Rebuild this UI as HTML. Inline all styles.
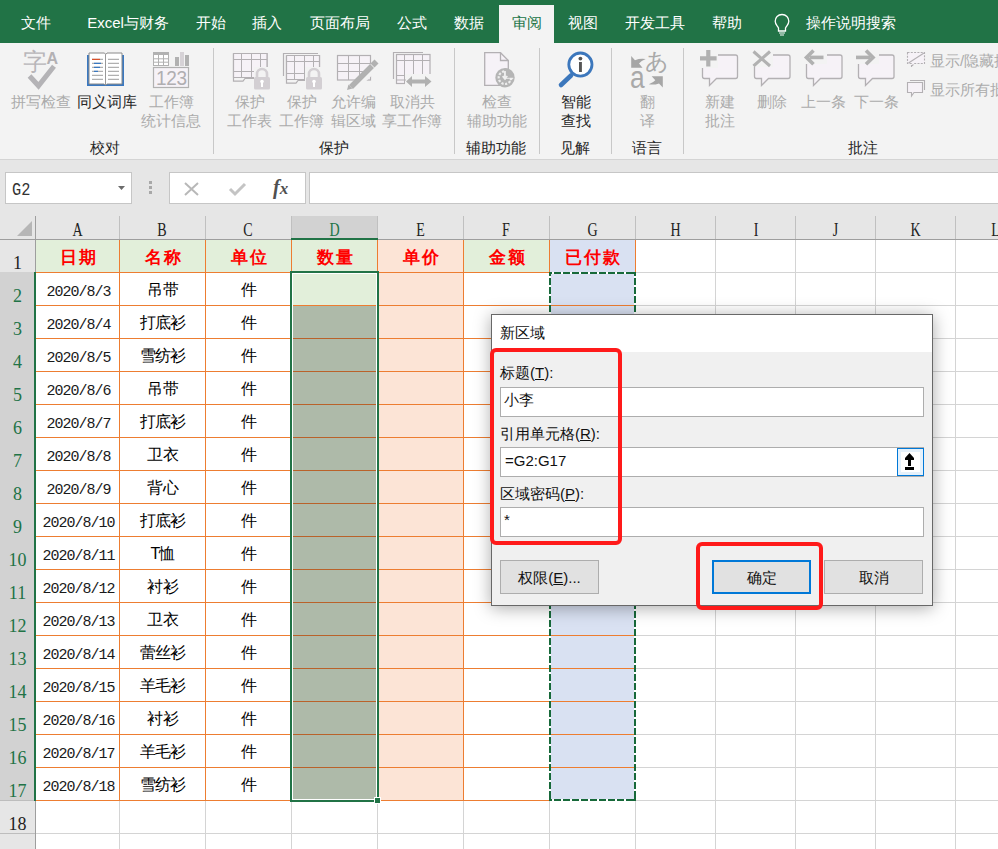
<!DOCTYPE html><html><head><meta charset="utf-8"><style>
html,body{margin:0;padding:0;}
body{width:998px;height:849px;overflow:hidden;position:relative;background:#fff;font-family:'Liberation Sans',sans-serif;}
.b{position:absolute;box-sizing:border-box;}
.t{position:absolute;text-align:center;white-space:nowrap;}
.tl{position:absolute;white-space:nowrap;}
</style></head><body>
<div class="b" style="left:0px;top:0px;width:998px;height:43px;background:#217346"></div>
<div class="b" style="left:499px;top:5px;width:55px;height:38px;background:#f3f3f3"></div>
<div class="t" style="left:-64.0px;top:13px;width:200px;font-size:15px;line-height:20px;color:#fff;font-weight:normal;">文件</div>
<div class="t" style="left:28.0px;top:13px;width:200px;font-size:15px;line-height:20px;color:#fff;font-weight:normal;">Excel与财务</div>
<div class="t" style="left:110.5px;top:13px;width:200px;font-size:15px;line-height:20px;color:#fff;font-weight:normal;">开始</div>
<div class="t" style="left:167.0px;top:13px;width:200px;font-size:15px;line-height:20px;color:#fff;font-weight:normal;">插入</div>
<div class="t" style="left:239.5px;top:13px;width:200px;font-size:15px;line-height:20px;color:#fff;font-weight:normal;">页面布局</div>
<div class="t" style="left:312.0px;top:13px;width:200px;font-size:15px;line-height:20px;color:#fff;font-weight:normal;">公式</div>
<div class="t" style="left:369.0px;top:13px;width:200px;font-size:15px;line-height:20px;color:#fff;font-weight:normal;">数据</div>
<div class="t" style="left:483.0px;top:13px;width:200px;font-size:15px;line-height:20px;color:#fff;font-weight:normal;">视图</div>
<div class="t" style="left:554.5px;top:13px;width:200px;font-size:15px;line-height:20px;color:#fff;font-weight:normal;">开发工具</div>
<div class="t" style="left:626.5px;top:13px;width:200px;font-size:15px;line-height:20px;color:#fff;font-weight:normal;">帮助</div>
<div class="t" style="left:751.0px;top:13px;width:200px;font-size:15px;line-height:20px;color:#fff;font-weight:normal;">操作说明搜索</div>
<div class="t" style="left:426.5px;top:13px;width:200px;font-size:15px;line-height:20px;color:#217346;font-weight:normal;">审阅</div>
<div class="b" style="left:0px;top:43px;width:998px;height:116px;background:#f3f3f3"></div>
<div class="b" style="left:0px;top:159px;width:998px;height:1px;background:#d4d4d4"></div>
<div class="b" style="left:0px;top:160px;width:998px;height:56px;background:#e6e6e6"></div>
<div class="t" style="left:-59.5px;top:92px;width:200px;font-size:15px;line-height:20px;color:#ababab;font-weight:normal;">拼写检查</div>
<div class="t" style="left:6.5px;top:92px;width:200px;font-size:15px;line-height:20px;color:#262626;font-weight:normal;">同义词库</div>
<div class="t" style="left:71.5px;top:92px;width:200px;font-size:15px;line-height:20px;color:#ababab;font-weight:normal;">工作簿</div>
<div class="t" style="left:70.5px;top:111px;width:200px;font-size:15px;line-height:20px;color:#ababab;font-weight:normal;">统计信息</div>
<div class="t" style="left:5.0px;top:138px;width:200px;font-size:15px;line-height:20px;color:#262626;font-weight:normal;">校对</div>
<div class="t" style="left:149.5px;top:92px;width:200px;font-size:15px;line-height:20px;color:#ababab;font-weight:normal;">保护</div>
<div class="t" style="left:149.5px;top:111px;width:200px;font-size:15px;line-height:20px;color:#ababab;font-weight:normal;">工作表</div>
<div class="t" style="left:201.5px;top:92px;width:200px;font-size:15px;line-height:20px;color:#ababab;font-weight:normal;">保护</div>
<div class="t" style="left:201.5px;top:111px;width:200px;font-size:15px;line-height:20px;color:#ababab;font-weight:normal;">工作簿</div>
<div class="t" style="left:253.5px;top:92px;width:200px;font-size:15px;line-height:20px;color:#ababab;font-weight:normal;">允许编</div>
<div class="t" style="left:253.5px;top:111px;width:200px;font-size:15px;line-height:20px;color:#ababab;font-weight:normal;">辑区域</div>
<div class="t" style="left:312.0px;top:92px;width:200px;font-size:15px;line-height:20px;color:#ababab;font-weight:normal;">取消共</div>
<div class="t" style="left:312.0px;top:111px;width:200px;font-size:15px;line-height:20px;color:#ababab;font-weight:normal;">享工作簿</div>
<div class="t" style="left:233.5px;top:138px;width:200px;font-size:15px;line-height:20px;color:#262626;font-weight:normal;">保护</div>
<div class="t" style="left:397.0px;top:92px;width:200px;font-size:15px;line-height:20px;color:#ababab;font-weight:normal;">检查</div>
<div class="t" style="left:396.5px;top:111px;width:200px;font-size:15px;line-height:20px;color:#ababab;font-weight:normal;">辅助功能</div>
<div class="t" style="left:396.0px;top:138px;width:200px;font-size:15px;line-height:20px;color:#262626;font-weight:normal;">辅助功能</div>
<div class="t" style="left:476.0px;top:92px;width:200px;font-size:15px;line-height:20px;color:#262626;font-weight:normal;">智能</div>
<div class="t" style="left:476.0px;top:111px;width:200px;font-size:15px;line-height:20px;color:#262626;font-weight:normal;">查找</div>
<div class="t" style="left:475.0px;top:138px;width:200px;font-size:15px;line-height:20px;color:#262626;font-weight:normal;">见解</div>
<div class="t" style="left:547.5px;top:92px;width:200px;font-size:15px;line-height:20px;color:#ababab;font-weight:normal;">翻</div>
<div class="t" style="left:547.5px;top:111px;width:200px;font-size:15px;line-height:20px;color:#ababab;font-weight:normal;">译</div>
<div class="t" style="left:547.0px;top:138px;width:200px;font-size:15px;line-height:20px;color:#262626;font-weight:normal;">语言</div>
<div class="t" style="left:620.0px;top:92px;width:200px;font-size:15px;line-height:20px;color:#ababab;font-weight:normal;">新建</div>
<div class="t" style="left:620.0px;top:111px;width:200px;font-size:15px;line-height:20px;color:#ababab;font-weight:normal;">批注</div>
<div class="t" style="left:671.5px;top:92px;width:200px;font-size:15px;line-height:20px;color:#ababab;font-weight:normal;">删除</div>
<div class="t" style="left:723.5px;top:92px;width:200px;font-size:15px;line-height:20px;color:#ababab;font-weight:normal;">上一条</div>
<div class="t" style="left:776.0px;top:92px;width:200px;font-size:15px;line-height:20px;color:#ababab;font-weight:normal;">下一条</div>
<div class="t" style="left:763.0px;top:138px;width:200px;font-size:15px;line-height:20px;color:#262626;font-weight:normal;">批注</div>
<div class="tl" style="left:930px;top:51px;font-size:15px;line-height:20px;color:#ababab;font-weight:normal;">显示/隐藏批注</div>
<div class="tl" style="left:930px;top:80px;font-size:15px;line-height:20px;color:#ababab;font-weight:normal;">显示所有批注</div>
<div class="b" style="left:213px;top:48px;width:1px;height:106px;background:#c8c8c8"></div>
<div class="b" style="left:454px;top:48px;width:1px;height:106px;background:#c8c8c8"></div>
<div class="b" style="left:539px;top:48px;width:1px;height:106px;background:#c8c8c8"></div>
<div class="b" style="left:611px;top:48px;width:1px;height:106px;background:#c8c8c8"></div>
<div class="b" style="left:683px;top:48px;width:1px;height:106px;background:#c8c8c8"></div>
<div class="b" style="left:5px;top:172px;width:127px;height:32px;background:#fff;border:1px solid #c6c6c6"></div>
<div class="tl" style="left:12px;top:179px;font-size:18px;line-height:22px;color:#333;font-weight:normal;font-family:'Liberation Mono';"><span style="display:inline-block;transform:scaleX(.85);transform-origin:0 0">G2</span></div>
<svg class="b" style="left:117px;top:185px" width="9" height="6" viewBox="0 0 9 6"><path d="M1 1H8L4.5 5Z" fill="#6b6b6b"/></svg>
<div class="b" style="left:149px;top:181px;width:3px;height:3px;background:#a8a8a8"></div>
<div class="b" style="left:149px;top:186px;width:3px;height:3px;background:#a8a8a8"></div>
<div class="b" style="left:149px;top:191px;width:3px;height:3px;background:#a8a8a8"></div>
<div class="b" style="left:169px;top:172px;width:137px;height:32px;background:#fff;border:1px solid #c6c6c6"></div>
<div class="b" style="left:309px;top:172px;width:700px;height:32px;background:#fff;border:1px solid #c6c6c6"></div>
<svg class="b" style="left:183px;top:181px" width="18" height="16" viewBox="0 0 18 16"><path d="M2 2L15 14M15 2L2 14" stroke="#b8b8b8" stroke-width="2"/></svg>
<svg class="b" style="left:228px;top:181px" width="20" height="16" viewBox="0 0 20 16"><path d="M2 8L7 13L17 3" stroke="#c4c4c4" stroke-width="3" fill="none"/></svg>
<div class="tl" style="left:273px;top:175.5px;font-size:20px;line-height:22px;color:#505050;font-weight:bold;font-family:'Liberation Serif';"><i>f</i><i style="font-size:17px">x</i></div>
<div class="b" style="left:0px;top:216px;width:998px;height:24px;background:#e6e6e6"></div>
<div class="b" style="left:291px;top:216px;width:86px;height:23px;background:#d2d2d2"></div>
<div class="b" style="left:35px;top:216px;width:1px;height:23px;background:#c0c0c0"></div>
<div class="b" style="left:119px;top:216px;width:1px;height:23px;background:#c0c0c0"></div>
<div class="b" style="left:205px;top:216px;width:1px;height:23px;background:#c0c0c0"></div>
<div class="b" style="left:291px;top:216px;width:1px;height:23px;background:#c0c0c0"></div>
<div class="b" style="left:377px;top:216px;width:1px;height:23px;background:#c0c0c0"></div>
<div class="b" style="left:463px;top:216px;width:1px;height:23px;background:#c0c0c0"></div>
<div class="b" style="left:549px;top:216px;width:1px;height:23px;background:#c0c0c0"></div>
<div class="b" style="left:635px;top:216px;width:1px;height:23px;background:#c0c0c0"></div>
<div class="b" style="left:715px;top:216px;width:1px;height:23px;background:#c0c0c0"></div>
<div class="b" style="left:795px;top:216px;width:1px;height:23px;background:#c0c0c0"></div>
<div class="b" style="left:875px;top:216px;width:1px;height:23px;background:#c0c0c0"></div>
<div class="b" style="left:955px;top:216px;width:1px;height:23px;background:#c0c0c0"></div>
<div class="b" style="left:0px;top:239px;width:998px;height:1px;background:#9e9e9e"></div>
<div class="b" style="left:291px;top:238px;width:87px;height:2px;background:#217346"></div>
<div class="t" style="left:-22.5px;top:220px;width:200px;font-size:18px;line-height:20px;color:#222;font-weight:normal;font-family:'Liberation Serif';"><span style="display:inline-block;transform:scaleX(.78)">A</span></div>
<div class="t" style="left:62.5px;top:220px;width:200px;font-size:18px;line-height:20px;color:#222;font-weight:normal;font-family:'Liberation Serif';"><span style="display:inline-block;transform:scaleX(.78)">B</span></div>
<div class="t" style="left:148.5px;top:220px;width:200px;font-size:18px;line-height:20px;color:#222;font-weight:normal;font-family:'Liberation Serif';"><span style="display:inline-block;transform:scaleX(.78)">C</span></div>
<div class="t" style="left:234.5px;top:220px;width:200px;font-size:18px;line-height:20px;color:#217346;font-weight:normal;font-family:'Liberation Serif';"><span style="display:inline-block;transform:scaleX(.78)">D</span></div>
<div class="t" style="left:320.5px;top:220px;width:200px;font-size:18px;line-height:20px;color:#222;font-weight:normal;font-family:'Liberation Serif';"><span style="display:inline-block;transform:scaleX(.78)">E</span></div>
<div class="t" style="left:406.5px;top:220px;width:200px;font-size:18px;line-height:20px;color:#222;font-weight:normal;font-family:'Liberation Serif';"><span style="display:inline-block;transform:scaleX(.78)">F</span></div>
<div class="t" style="left:492.5px;top:220px;width:200px;font-size:18px;line-height:20px;color:#222;font-weight:normal;font-family:'Liberation Serif';"><span style="display:inline-block;transform:scaleX(.78)">G</span></div>
<div class="t" style="left:575.5px;top:220px;width:200px;font-size:18px;line-height:20px;color:#222;font-weight:normal;font-family:'Liberation Serif';"><span style="display:inline-block;transform:scaleX(.78)">H</span></div>
<div class="t" style="left:655.5px;top:220px;width:200px;font-size:18px;line-height:20px;color:#222;font-weight:normal;font-family:'Liberation Serif';"><span style="display:inline-block;transform:scaleX(.78)">I</span></div>
<div class="t" style="left:735.5px;top:220px;width:200px;font-size:18px;line-height:20px;color:#222;font-weight:normal;font-family:'Liberation Serif';"><span style="display:inline-block;transform:scaleX(.78)">J</span></div>
<div class="t" style="left:815.5px;top:220px;width:200px;font-size:18px;line-height:20px;color:#222;font-weight:normal;font-family:'Liberation Serif';"><span style="display:inline-block;transform:scaleX(.78)">K</span></div>
<div class="t" style="left:895.5px;top:220px;width:200px;font-size:18px;line-height:20px;color:#222;font-weight:normal;font-family:'Liberation Serif';"><span style="display:inline-block;transform:scaleX(.78)">L</span></div>
<svg class="b" style="left:16px;top:219px" width="17" height="18" viewBox="0 0 17 18"><path d="M1 17L16 2V17Z" fill="#b6b6b6"/></svg>
<div class="b" style="left:0px;top:240px;width:35px;height:609px;background:#e6e6e6"></div>
<div class="b" style="left:0px;top:272px;width:35px;height:528px;background:#d2d2d2"></div>
<div class="b" style="left:35px;top:216px;width:1px;height:633px;background:#9e9e9e"></div>
<div class="b" style="left:0px;top:272px;width:35px;height:1px;#bdbdbd"></div>
<div class="t" style="left:-82.5px;top:252px;width:200px;font-size:18px;line-height:22px;color:#222;font-weight:normal;font-family:'Liberation Serif';">1</div>
<div class="b" style="left:0px;top:305px;width:35px;height:1px;#bdbdbd"></div>
<div class="t" style="left:-82.5px;top:285px;width:200px;font-size:18px;line-height:22px;color:#217346;font-weight:normal;font-family:'Liberation Serif';">2</div>
<div class="b" style="left:0px;top:338px;width:35px;height:1px;#bdbdbd"></div>
<div class="t" style="left:-82.5px;top:318px;width:200px;font-size:18px;line-height:22px;color:#217346;font-weight:normal;font-family:'Liberation Serif';">3</div>
<div class="b" style="left:0px;top:371px;width:35px;height:1px;#bdbdbd"></div>
<div class="t" style="left:-82.5px;top:351px;width:200px;font-size:18px;line-height:22px;color:#217346;font-weight:normal;font-family:'Liberation Serif';">4</div>
<div class="b" style="left:0px;top:404px;width:35px;height:1px;#bdbdbd"></div>
<div class="t" style="left:-82.5px;top:384px;width:200px;font-size:18px;line-height:22px;color:#217346;font-weight:normal;font-family:'Liberation Serif';">5</div>
<div class="b" style="left:0px;top:437px;width:35px;height:1px;#bdbdbd"></div>
<div class="t" style="left:-82.5px;top:417px;width:200px;font-size:18px;line-height:22px;color:#217346;font-weight:normal;font-family:'Liberation Serif';">6</div>
<div class="b" style="left:0px;top:470px;width:35px;height:1px;#bdbdbd"></div>
<div class="t" style="left:-82.5px;top:450px;width:200px;font-size:18px;line-height:22px;color:#217346;font-weight:normal;font-family:'Liberation Serif';">7</div>
<div class="b" style="left:0px;top:503px;width:35px;height:1px;#bdbdbd"></div>
<div class="t" style="left:-82.5px;top:483px;width:200px;font-size:18px;line-height:22px;color:#217346;font-weight:normal;font-family:'Liberation Serif';">8</div>
<div class="b" style="left:0px;top:536px;width:35px;height:1px;#bdbdbd"></div>
<div class="t" style="left:-82.5px;top:516px;width:200px;font-size:18px;line-height:22px;color:#217346;font-weight:normal;font-family:'Liberation Serif';">9</div>
<div class="b" style="left:0px;top:569px;width:35px;height:1px;#bdbdbd"></div>
<div class="t" style="left:-82.5px;top:549px;width:200px;font-size:18px;line-height:22px;color:#217346;font-weight:normal;font-family:'Liberation Serif';">10</div>
<div class="b" style="left:0px;top:602px;width:35px;height:1px;#bdbdbd"></div>
<div class="t" style="left:-82.5px;top:582px;width:200px;font-size:18px;line-height:22px;color:#217346;font-weight:normal;font-family:'Liberation Serif';">11</div>
<div class="b" style="left:0px;top:635px;width:35px;height:1px;#bdbdbd"></div>
<div class="t" style="left:-82.5px;top:615px;width:200px;font-size:18px;line-height:22px;color:#217346;font-weight:normal;font-family:'Liberation Serif';">12</div>
<div class="b" style="left:0px;top:668px;width:35px;height:1px;#bdbdbd"></div>
<div class="t" style="left:-82.5px;top:648px;width:200px;font-size:18px;line-height:22px;color:#217346;font-weight:normal;font-family:'Liberation Serif';">13</div>
<div class="b" style="left:0px;top:701px;width:35px;height:1px;#bdbdbd"></div>
<div class="t" style="left:-82.5px;top:681px;width:200px;font-size:18px;line-height:22px;color:#217346;font-weight:normal;font-family:'Liberation Serif';">14</div>
<div class="b" style="left:0px;top:734px;width:35px;height:1px;#bdbdbd"></div>
<div class="t" style="left:-82.5px;top:714px;width:200px;font-size:18px;line-height:22px;color:#217346;font-weight:normal;font-family:'Liberation Serif';">15</div>
<div class="b" style="left:0px;top:767px;width:35px;height:1px;#bdbdbd"></div>
<div class="t" style="left:-82.5px;top:747px;width:200px;font-size:18px;line-height:22px;color:#217346;font-weight:normal;font-family:'Liberation Serif';">16</div>
<div class="b" style="left:0px;top:800px;width:35px;height:1px;background:#bdbdbd"></div>
<div class="t" style="left:-82.5px;top:780px;width:200px;font-size:18px;line-height:22px;color:#217346;font-weight:normal;font-family:'Liberation Serif';">17</div>
<div class="b" style="left:0px;top:833px;width:35px;height:1px;background:#bdbdbd"></div>
<div class="t" style="left:-82.5px;top:813px;width:200px;font-size:18px;line-height:22px;color:#222;font-weight:normal;font-family:'Liberation Serif';">18</div>
<div class="b" style="left:34px;top:272px;width:2px;height:529px;background:#217346"></div>
<div class="b" style="left:119px;top:240px;width:1px;height:609px;background:#d4d4d4"></div>
<div class="b" style="left:205px;top:240px;width:1px;height:609px;background:#d4d4d4"></div>
<div class="b" style="left:291px;top:240px;width:1px;height:609px;background:#d4d4d4"></div>
<div class="b" style="left:377px;top:240px;width:1px;height:609px;background:#d4d4d4"></div>
<div class="b" style="left:463px;top:240px;width:1px;height:609px;background:#d4d4d4"></div>
<div class="b" style="left:549px;top:240px;width:1px;height:609px;background:#d4d4d4"></div>
<div class="b" style="left:635px;top:240px;width:1px;height:609px;background:#d4d4d4"></div>
<div class="b" style="left:715px;top:240px;width:1px;height:609px;background:#d4d4d4"></div>
<div class="b" style="left:795px;top:240px;width:1px;height:609px;background:#d4d4d4"></div>
<div class="b" style="left:875px;top:240px;width:1px;height:609px;background:#d4d4d4"></div>
<div class="b" style="left:955px;top:240px;width:1px;height:609px;background:#d4d4d4"></div>
<div class="b" style="left:36px;top:272px;width:962px;height:1px;background:#d4d4d4"></div>
<div class="b" style="left:36px;top:305px;width:962px;height:1px;background:#d4d4d4"></div>
<div class="b" style="left:36px;top:338px;width:962px;height:1px;background:#d4d4d4"></div>
<div class="b" style="left:36px;top:371px;width:962px;height:1px;background:#d4d4d4"></div>
<div class="b" style="left:36px;top:404px;width:962px;height:1px;background:#d4d4d4"></div>
<div class="b" style="left:36px;top:437px;width:962px;height:1px;background:#d4d4d4"></div>
<div class="b" style="left:36px;top:470px;width:962px;height:1px;background:#d4d4d4"></div>
<div class="b" style="left:36px;top:503px;width:962px;height:1px;background:#d4d4d4"></div>
<div class="b" style="left:36px;top:536px;width:962px;height:1px;background:#d4d4d4"></div>
<div class="b" style="left:36px;top:569px;width:962px;height:1px;background:#d4d4d4"></div>
<div class="b" style="left:36px;top:602px;width:962px;height:1px;background:#d4d4d4"></div>
<div class="b" style="left:36px;top:635px;width:962px;height:1px;background:#d4d4d4"></div>
<div class="b" style="left:36px;top:668px;width:962px;height:1px;background:#d4d4d4"></div>
<div class="b" style="left:36px;top:701px;width:962px;height:1px;background:#d4d4d4"></div>
<div class="b" style="left:36px;top:734px;width:962px;height:1px;background:#d4d4d4"></div>
<div class="b" style="left:36px;top:767px;width:962px;height:1px;background:#d4d4d4"></div>
<div class="b" style="left:36px;top:800px;width:962px;height:1px;background:#d4d4d4"></div>
<div class="b" style="left:36px;top:833px;width:962px;height:1px;background:#d4d4d4"></div>
<div class="b" style="left:36px;top:240px;width:83px;height:32px;background:#e2efda"></div>
<div class="b" style="left:120px;top:240px;width:85px;height:32px;background:#e2efda"></div>
<div class="b" style="left:206px;top:240px;width:85px;height:32px;background:#e2efda"></div>
<div class="b" style="left:292px;top:240px;width:85px;height:32px;background:#e2efda"></div>
<div class="b" style="left:378px;top:240px;width:85px;height:32px;background:#fce4d6"></div>
<div class="b" style="left:464px;top:240px;width:85px;height:32px;background:#e2efda"></div>
<div class="b" style="left:550px;top:240px;width:85px;height:32px;background:#d9e1f2"></div>
<div class="b" style="left:378px;top:273px;width:85px;height:527px;background:#fce4d6"></div>
<div class="b" style="left:550px;top:273px;width:85px;height:527px;background:#d9e1f2"></div>
<div class="b" style="left:292px;top:306px;width:85px;height:494px;background:#aebaa9"></div>
<div class="b" style="left:292px;top:273px;width:85px;height:32px;background:#e2efda"></div>
<div class="b" style="left:119px;top:240px;width:1px;height:561px;background:#ed7d31"></div>
<div class="b" style="left:205px;top:240px;width:1px;height:561px;background:#ed7d31"></div>
<div class="b" style="left:291px;top:240px;width:1px;height:561px;background:#ed7d31"></div>
<div class="b" style="left:377px;top:240px;width:1px;height:561px;background:#ed7d31"></div>
<div class="b" style="left:463px;top:240px;width:1px;height:561px;background:#ed7d31"></div>
<div class="b" style="left:549px;top:240px;width:1px;height:561px;background:#ed7d31"></div>
<div class="b" style="left:635px;top:240px;width:1px;height:561px;background:#ed7d31"></div>
<div class="b" style="left:36px;top:272px;width:600px;height:1px;background:#ed7d31"></div>
<div class="b" style="left:36px;top:305px;width:600px;height:1px;background:#ed7d31"></div>
<div class="b" style="left:36px;top:338px;width:600px;height:1px;background:#ed7d31"></div>
<div class="b" style="left:36px;top:371px;width:600px;height:1px;background:#ed7d31"></div>
<div class="b" style="left:36px;top:404px;width:600px;height:1px;background:#ed7d31"></div>
<div class="b" style="left:36px;top:437px;width:600px;height:1px;background:#ed7d31"></div>
<div class="b" style="left:36px;top:470px;width:600px;height:1px;background:#ed7d31"></div>
<div class="b" style="left:36px;top:503px;width:600px;height:1px;background:#ed7d31"></div>
<div class="b" style="left:36px;top:536px;width:600px;height:1px;background:#ed7d31"></div>
<div class="b" style="left:36px;top:569px;width:600px;height:1px;background:#ed7d31"></div>
<div class="b" style="left:36px;top:602px;width:600px;height:1px;background:#ed7d31"></div>
<div class="b" style="left:36px;top:635px;width:600px;height:1px;background:#ed7d31"></div>
<div class="b" style="left:36px;top:668px;width:600px;height:1px;background:#ed7d31"></div>
<div class="b" style="left:36px;top:701px;width:600px;height:1px;background:#ed7d31"></div>
<div class="b" style="left:36px;top:734px;width:600px;height:1px;background:#ed7d31"></div>
<div class="b" style="left:36px;top:767px;width:600px;height:1px;background:#ed7d31"></div>
<div class="b" style="left:36px;top:800px;width:600px;height:1px;background:#ed7d31"></div>
<div class="b" style="left:292px;top:338px;width:85px;height:1px;background:#b9622a"></div>
<div class="b" style="left:292px;top:371px;width:85px;height:1px;background:#b9622a"></div>
<div class="b" style="left:292px;top:404px;width:85px;height:1px;background:#b9622a"></div>
<div class="b" style="left:292px;top:437px;width:85px;height:1px;background:#b9622a"></div>
<div class="b" style="left:292px;top:470px;width:85px;height:1px;background:#b9622a"></div>
<div class="b" style="left:292px;top:503px;width:85px;height:1px;background:#b9622a"></div>
<div class="b" style="left:292px;top:536px;width:85px;height:1px;background:#b9622a"></div>
<div class="b" style="left:292px;top:569px;width:85px;height:1px;background:#b9622a"></div>
<div class="b" style="left:292px;top:602px;width:85px;height:1px;background:#b9622a"></div>
<div class="b" style="left:292px;top:635px;width:85px;height:1px;background:#b9622a"></div>
<div class="b" style="left:292px;top:668px;width:85px;height:1px;background:#b9622a"></div>
<div class="b" style="left:292px;top:701px;width:85px;height:1px;background:#b9622a"></div>
<div class="b" style="left:292px;top:734px;width:85px;height:1px;background:#b9622a"></div>
<div class="b" style="left:292px;top:767px;width:85px;height:1px;background:#b9622a"></div>
<div class="t" style="left:-21.5px;top:248px;width:200px;font-size:17px;line-height:20px;color:#ff0000;font-weight:900;letter-spacing:2px;">日期</div>
<div class="t" style="left:63.5px;top:248px;width:200px;font-size:17px;line-height:20px;color:#ff0000;font-weight:900;letter-spacing:2px;">名称</div>
<div class="t" style="left:149.5px;top:248px;width:200px;font-size:17px;line-height:20px;color:#ff0000;font-weight:900;letter-spacing:2px;">单位</div>
<div class="t" style="left:235.5px;top:248px;width:200px;font-size:17px;line-height:20px;color:#ff0000;font-weight:900;letter-spacing:2px;">数量</div>
<div class="t" style="left:321.5px;top:248px;width:200px;font-size:17px;line-height:20px;color:#ff0000;font-weight:900;letter-spacing:2px;">单价</div>
<div class="t" style="left:407.5px;top:248px;width:200px;font-size:17px;line-height:20px;color:#ff0000;font-weight:900;letter-spacing:2px;">金额</div>
<div class="t" style="left:493.5px;top:248px;width:200px;font-size:17px;line-height:20px;color:#ff0000;font-weight:900;letter-spacing:2px;">已付款</div>
<div class="t" style="left:-21.5px;top:283px;width:200px;font-size:15px;line-height:20px;color:#1a1a1a;font-weight:normal;font-family:'Liberation Mono';letter-spacing:-1px;">2020/8/3</div>
<div class="t" style="left:62.6px;top:280px;width:200px;font-size:16px;line-height:20px;color:#000;font-weight:300;letter-spacing:-0.7px;">吊带</div>
<div class="t" style="left:149.0px;top:280px;width:200px;font-size:16px;line-height:20px;color:#000;font-weight:300;">件</div>
<div class="t" style="left:-21.5px;top:316px;width:200px;font-size:15px;line-height:20px;color:#1a1a1a;font-weight:normal;font-family:'Liberation Mono';letter-spacing:-1px;">2020/8/4</div>
<div class="t" style="left:62.6px;top:313px;width:200px;font-size:16px;line-height:20px;color:#000;font-weight:300;letter-spacing:-0.7px;">打底衫</div>
<div class="t" style="left:149.0px;top:313px;width:200px;font-size:16px;line-height:20px;color:#000;font-weight:300;">件</div>
<div class="t" style="left:-21.5px;top:349px;width:200px;font-size:15px;line-height:20px;color:#1a1a1a;font-weight:normal;font-family:'Liberation Mono';letter-spacing:-1px;">2020/8/5</div>
<div class="t" style="left:62.6px;top:346px;width:200px;font-size:16px;line-height:20px;color:#000;font-weight:300;letter-spacing:-0.7px;">雪纺衫</div>
<div class="t" style="left:149.0px;top:346px;width:200px;font-size:16px;line-height:20px;color:#000;font-weight:300;">件</div>
<div class="t" style="left:-21.5px;top:382px;width:200px;font-size:15px;line-height:20px;color:#1a1a1a;font-weight:normal;font-family:'Liberation Mono';letter-spacing:-1px;">2020/8/6</div>
<div class="t" style="left:62.6px;top:379px;width:200px;font-size:16px;line-height:20px;color:#000;font-weight:300;letter-spacing:-0.7px;">吊带</div>
<div class="t" style="left:149.0px;top:379px;width:200px;font-size:16px;line-height:20px;color:#000;font-weight:300;">件</div>
<div class="t" style="left:-21.5px;top:415px;width:200px;font-size:15px;line-height:20px;color:#1a1a1a;font-weight:normal;font-family:'Liberation Mono';letter-spacing:-1px;">2020/8/7</div>
<div class="t" style="left:62.6px;top:412px;width:200px;font-size:16px;line-height:20px;color:#000;font-weight:300;letter-spacing:-0.7px;">打底衫</div>
<div class="t" style="left:149.0px;top:412px;width:200px;font-size:16px;line-height:20px;color:#000;font-weight:300;">件</div>
<div class="t" style="left:-21.5px;top:448px;width:200px;font-size:15px;line-height:20px;color:#1a1a1a;font-weight:normal;font-family:'Liberation Mono';letter-spacing:-1px;">2020/8/8</div>
<div class="t" style="left:62.6px;top:445px;width:200px;font-size:16px;line-height:20px;color:#000;font-weight:300;letter-spacing:-0.7px;">卫衣</div>
<div class="t" style="left:149.0px;top:445px;width:200px;font-size:16px;line-height:20px;color:#000;font-weight:300;">件</div>
<div class="t" style="left:-21.5px;top:481px;width:200px;font-size:15px;line-height:20px;color:#1a1a1a;font-weight:normal;font-family:'Liberation Mono';letter-spacing:-1px;">2020/8/9</div>
<div class="t" style="left:62.6px;top:478px;width:200px;font-size:16px;line-height:20px;color:#000;font-weight:300;letter-spacing:-0.7px;">背心</div>
<div class="t" style="left:149.0px;top:478px;width:200px;font-size:16px;line-height:20px;color:#000;font-weight:300;">件</div>
<div class="t" style="left:-21.5px;top:514px;width:200px;font-size:15px;line-height:20px;color:#1a1a1a;font-weight:normal;font-family:'Liberation Mono';letter-spacing:-1px;">2020/8/10</div>
<div class="t" style="left:62.6px;top:511px;width:200px;font-size:16px;line-height:20px;color:#000;font-weight:300;letter-spacing:-0.7px;">打底衫</div>
<div class="t" style="left:149.0px;top:511px;width:200px;font-size:16px;line-height:20px;color:#000;font-weight:300;">件</div>
<div class="t" style="left:-21.5px;top:547px;width:200px;font-size:15px;line-height:20px;color:#1a1a1a;font-weight:normal;font-family:'Liberation Mono';letter-spacing:-1px;">2020/8/11</div>
<div class="t" style="left:62.6px;top:544px;width:200px;font-size:16px;line-height:20px;color:#000;font-weight:300;letter-spacing:-0.7px;">T恤</div>
<div class="t" style="left:149.0px;top:544px;width:200px;font-size:16px;line-height:20px;color:#000;font-weight:300;">件</div>
<div class="t" style="left:-21.5px;top:580px;width:200px;font-size:15px;line-height:20px;color:#1a1a1a;font-weight:normal;font-family:'Liberation Mono';letter-spacing:-1px;">2020/8/12</div>
<div class="t" style="left:62.6px;top:577px;width:200px;font-size:16px;line-height:20px;color:#000;font-weight:300;letter-spacing:-0.7px;">衬衫</div>
<div class="t" style="left:149.0px;top:577px;width:200px;font-size:16px;line-height:20px;color:#000;font-weight:300;">件</div>
<div class="t" style="left:-21.5px;top:613px;width:200px;font-size:15px;line-height:20px;color:#1a1a1a;font-weight:normal;font-family:'Liberation Mono';letter-spacing:-1px;">2020/8/13</div>
<div class="t" style="left:62.6px;top:610px;width:200px;font-size:16px;line-height:20px;color:#000;font-weight:300;letter-spacing:-0.7px;">卫衣</div>
<div class="t" style="left:149.0px;top:610px;width:200px;font-size:16px;line-height:20px;color:#000;font-weight:300;">件</div>
<div class="t" style="left:-21.5px;top:646px;width:200px;font-size:15px;line-height:20px;color:#1a1a1a;font-weight:normal;font-family:'Liberation Mono';letter-spacing:-1px;">2020/8/14</div>
<div class="t" style="left:62.6px;top:643px;width:200px;font-size:16px;line-height:20px;color:#000;font-weight:300;letter-spacing:-0.7px;">蕾丝衫</div>
<div class="t" style="left:149.0px;top:643px;width:200px;font-size:16px;line-height:20px;color:#000;font-weight:300;">件</div>
<div class="t" style="left:-21.5px;top:679px;width:200px;font-size:15px;line-height:20px;color:#1a1a1a;font-weight:normal;font-family:'Liberation Mono';letter-spacing:-1px;">2020/8/15</div>
<div class="t" style="left:62.6px;top:676px;width:200px;font-size:16px;line-height:20px;color:#000;font-weight:300;letter-spacing:-0.7px;">羊毛衫</div>
<div class="t" style="left:149.0px;top:676px;width:200px;font-size:16px;line-height:20px;color:#000;font-weight:300;">件</div>
<div class="t" style="left:-21.5px;top:712px;width:200px;font-size:15px;line-height:20px;color:#1a1a1a;font-weight:normal;font-family:'Liberation Mono';letter-spacing:-1px;">2020/8/16</div>
<div class="t" style="left:62.6px;top:709px;width:200px;font-size:16px;line-height:20px;color:#000;font-weight:300;letter-spacing:-0.7px;">衬衫</div>
<div class="t" style="left:149.0px;top:709px;width:200px;font-size:16px;line-height:20px;color:#000;font-weight:300;">件</div>
<div class="t" style="left:-21.5px;top:745px;width:200px;font-size:15px;line-height:20px;color:#1a1a1a;font-weight:normal;font-family:'Liberation Mono';letter-spacing:-1px;">2020/8/17</div>
<div class="t" style="left:62.6px;top:742px;width:200px;font-size:16px;line-height:20px;color:#000;font-weight:300;letter-spacing:-0.7px;">羊毛衫</div>
<div class="t" style="left:149.0px;top:742px;width:200px;font-size:16px;line-height:20px;color:#000;font-weight:300;">件</div>
<div class="t" style="left:-21.5px;top:778px;width:200px;font-size:15px;line-height:20px;color:#1a1a1a;font-weight:normal;font-family:'Liberation Mono';letter-spacing:-1px;">2020/8/18</div>
<div class="t" style="left:62.6px;top:775px;width:200px;font-size:16px;line-height:20px;color:#000;font-weight:300;letter-spacing:-0.7px;">雪纺衫</div>
<div class="t" style="left:149.0px;top:775px;width:200px;font-size:16px;line-height:20px;color:#000;font-weight:300;">件</div>
<div class="b" style="left:290px;top:271px;width:89px;height:531px;border:2px solid #217346"></div>
<div class="b" style="left:292px;top:273px;width:85px;height:527px;border:1px solid #fff"></div>
<div class="b" style="left:374px;top:797px;width:7px;height:7px;background:#fff"></div>
<div class="b" style="left:375px;top:798px;width:5px;height:5px;background:#217346"></div>
<div class="b" style="left:549px;top:272px;width:87px;height:2px;background:repeating-linear-gradient(90deg,#17693a 0 7px,#fff 7px 9px);background-position:-4px 0"></div>
<div class="b" style="left:549px;top:799px;width:87px;height:2px;background:repeating-linear-gradient(90deg,#17693a 0 7px,#fff 7px 9px);background-position:-4px 0"></div>
<div class="b" style="left:549px;top:272px;width:2px;height:529px;background:repeating-linear-gradient(180deg,#17693a 0 7px,#fff 7px 9px);background-position:0 -3px"></div>
<div class="b" style="left:634px;top:272px;width:2px;height:529px;background:repeating-linear-gradient(180deg,#17693a 0 7px,#fff 7px 9px);background-position:0 -3px"></div>
<div class="b" style="left:491px;top:314px;width:442px;height:292px;background:#f0f0f0;border:1px solid #686868;box-shadow:0 2px 16px rgba(0,0,0,0.34);"></div>
<div class="b" style="left:492px;top:315px;width:440px;height:37px;background:#fff"></div>
<div class="tl" style="left:500px;top:323px;font-size:15px;line-height:20px;color:#111;font-weight:normal;">新区域</div>
<div class="tl" style="left:500px;top:363px;font-size:15px;line-height:20px;color:#111;font-weight:normal;">标题(<u>T</u>):</div>
<div class="b" style="left:500px;top:387px;width:424px;height:30px;background:#fff;border:1px solid #adadad"></div>
<div class="tl" style="left:504px;top:390px;font-size:15px;line-height:20px;color:#111;font-weight:normal;">小李</div>
<div class="tl" style="left:500px;top:424px;font-size:15px;line-height:20px;color:#111;font-weight:normal;">引用单元格(<u>R</u>):</div>
<div class="b" style="left:500px;top:447px;width:424px;height:30px;background:#fff;border:1px solid #adadad"></div>
<div class="tl" style="left:505px;top:451px;font-size:15px;line-height:20px;color:#111;font-weight:normal;">=G2:G17</div>
<div class="b" style="left:897px;top:448px;width:27px;height:28px;background:#fff;border:1px solid #0078d7;box-shadow:inset 0 0 0 3px #e5f1fb"></div>
<svg class="b" style="left:904px;top:452px" width="11" height="19" viewBox="0 0 11 19"><path d="M5.5 1L10 6V8H7V14H4V8H1V6Z" fill="#000"/><rect x="1" y="15" width="9" height="3" fill="#000"/></svg>
<div class="tl" style="left:500px;top:484px;font-size:15px;line-height:20px;color:#111;font-weight:normal;">区域密码(<u>P</u>):</div>
<div class="b" style="left:500px;top:507px;width:424px;height:30px;background:#fff;border:1px solid #adadad"></div>
<div class="tl" style="left:504px;top:510px;font-size:15px;line-height:20px;color:#111;font-weight:normal;">*</div>
<div class="b" style="left:500px;top:560px;width:99px;height:34px;background:#e1e1e1;border:1px solid #adadad"></div>
<div class="t" style="left:449.5px;top:568px;width:200px;font-size:15px;line-height:20px;color:#111;font-weight:normal;">权限(<u>E</u>)...</div>
<div class="b" style="left:712px;top:560px;width:99px;height:34px;background:#e1e1e1;border:2px solid #0078d7"></div>
<div class="t" style="left:661.5px;top:568px;width:200px;font-size:15px;line-height:20px;color:#111;font-weight:normal;">确定</div>
<div class="b" style="left:824px;top:560px;width:99px;height:34px;background:#e1e1e1;border:1px solid #adadad"></div>
<div class="t" style="left:773.5px;top:568px;width:200px;font-size:15px;line-height:20px;color:#111;font-weight:normal;">取消</div>
<div class="b" style="left:490px;top:348px;width:132px;height:197px;border:4px solid #ff1a1a;border-radius:6px"></div>
<div class="b" style="left:696px;top:542px;width:127px;height:68px;border:4px solid #ff1a1a;border-radius:6px"></div>
<svg class="b" style="left:772px;top:12px" width="20" height="24" viewBox="0 0 20 24"><path d="M10 2.5C5.9 2.5 3.2 5.5 3.2 9.2C3.2 12.2 5.3 13.8 6.5 16V19H13.5V16C14.7 13.8 16.8 12.2 16.8 9.2C16.8 5.5 14.1 2.5 10 2.5Z" fill="none" stroke="#fff" stroke-width="1.3"/><path d="M7 21H13M8 23H12" stroke="#fff" stroke-width="1.2"/></svg>
<div class="tl" style="left:23px;top:46px;font-size:24px;line-height:32px;color:#b8b6b9;font-weight:300">字</div>
<div class="tl" style="left:46.5px;top:49px;font-size:16px;line-height:20px;color:#b3b1b4;font-weight:bold">A</div>
<svg class="b" style="left:20px;top:45px" width="50" height="50" viewBox="0 0 50 50"><path d="M9.5 31L18.5 40.8L34 21.3" fill="none" stroke="#b4b3b6" stroke-width="5" stroke-linecap="butt"/></svg>
<svg class="b" style="left:82px;top:45px" width="50" height="50" viewBox="0 0 50 50"><rect x="5" y="10" width="37" height="31" fill="#3a78c0"/>
<path d="M7 8H22.5Q23.5 9 23.5 9.5Q24.5 9 25 8H40V39H25Q24 40 23.5 40Q23 40 22 39H7Z" fill="#fff" stroke="#8a8a8a" stroke-width="1"/>
<path d="M23.5 9.5V40" stroke="#999" stroke-width="1"/>
<g stroke-width="1.2"><path d="M10 14.4H21M10 18.4H21M10 22.4H21M10 26.4H21M10 30.4H21M10 34.4H21M26 14.4H37M26 18.4H37M26 22.4H37M26 26.4H37M26 30.4H37M26 34.4H37" stroke="#b0b0b0"/>
<path d="M10 14.4H18" stroke="#d9502a"/><path d="M12 18.4H19M12 22.4H18M12 26.4H16" stroke="#3a78c0"/></g></svg>
<svg class="b" style="left:146px;top:45px" width="50" height="50" viewBox="0 0 50 50"><rect x="7.5" y="7.5" width="15" height="13" fill="#fff" stroke="#b1b1b1" stroke-width="1"/><rect x="7" y="7" width="16" height="3" fill="#b1b1b1"/>
<path d="M12.5 10V20.5M17.5 10V20.5M7.5 13.8H22.5M7.5 17.2H22.5" stroke="#b1b1b1" stroke-width="1"/>
<rect x="29" y="12" width="4" height="9" fill="#b1b1b1"/><rect x="34" y="7" width="4" height="14" fill="#d6d2d6"/><rect x="39" y="10" width="4" height="11" fill="#b1b1b1"/>
<rect x="7.5" y="22.5" width="35" height="20" fill="#f6f2f7" stroke="#b1b1b1" stroke-width="1.2"/></svg>
<div class="tl" style="left:156px;top:67.5px;font-size:19px;line-height:22px;color:#b0aeb1;letter-spacing:-0.3px;transform:scaleY(1.05)">123</div>
<svg class="b" style="left:228px;top:45px" width="50" height="50" viewBox="0 0 50 50"><path d="M5.5 32.5V8.5H39.0V32.5" fill="#f6f2f7" stroke="#b3b0b3" stroke-width="1.2"/><rect x="5.5" y="8.5" width="33.5" height="24" fill="#f6f2f7"/><path d="M5.5 8.5H39.0V32.5M5.5 8.5V36.2H15.0L17.0 33.5H39.0" fill="none" stroke="#b3b0b3" stroke-width="1.2"/><path d="M5.5 32.5H39.0" stroke="#b3b0b3" stroke-width="1"/><path d="M13.5 8.5V32.5" stroke="#b3b0b3" stroke-width="1"/><path d="M23.5 8.5V32.5" stroke="#b3b0b3" stroke-width="1"/><path d="M32.5 8.5V32.5" stroke="#b3b0b3" stroke-width="1"/><path d="M5.5 14.5H39.0" stroke="#b3b0b3" stroke-width="1"/><path d="M5.5 26.5H39.0" stroke="#b3b0b3" stroke-width="1"/><rect x="26" y="22" width="20" height="25" fill="#f3f3f3"/><path d="M29 32V29A5 5 0 0 1 39 29V32" fill="none" stroke="#d3cfd3" stroke-width="2.6"/><rect x="26" y="32" width="16" height="12.5" rx="1.5" fill="#d3cfd3"/><path d="M34 36V42" stroke="#fff" stroke-width="2"/><circle cx="34" cy="36.5" r="1.8" fill="#fff"/></svg>
<svg class="b" style="left:278px;top:45px" width="50" height="50" viewBox="0 0 50 50"><path d="M5.5 31V8.5H40" fill="none" stroke="#b3b0b3" stroke-width="1.2"/><path d="M8.5 34.5V10.5H41.5V34.5" fill="#f6f2f7" stroke="#b3b0b3" stroke-width="1.2"/><rect x="8.5" y="10.5" width="33" height="24" fill="#f6f2f7"/><path d="M8.5 10.5H41.5V34.5M8.5 10.5V38.2H18.0L20.0 35.5H41.5" fill="none" stroke="#b3b0b3" stroke-width="1.2"/><path d="M8.5 34.5H41.5" stroke="#b3b0b3" stroke-width="1"/><path d="M16.5 10.5V34.5" stroke="#b3b0b3" stroke-width="1"/><path d="M26.5 10.5V34.5" stroke="#b3b0b3" stroke-width="1"/><path d="M35.5 10.5V34.5" stroke="#b3b0b3" stroke-width="1"/><path d="M8.5 16.5H41.5" stroke="#b3b0b3" stroke-width="1"/><path d="M8.5 28.5H41.5" stroke="#b3b0b3" stroke-width="1"/><rect x="27" y="22" width="20" height="25" fill="#f3f3f3"/><path d="M31 32V29A5 5 0 0 1 41 29V32" fill="none" stroke="#d3cfd3" stroke-width="2.6"/><rect x="28" y="32" width="16" height="12.5" rx="1.5" fill="#d3cfd3"/><path d="M36 36V42" stroke="#fff" stroke-width="2"/><circle cx="36" cy="36.5" r="1.8" fill="#fff"/></svg>
<svg class="b" style="left:330px;top:45px" width="50" height="50" viewBox="0 0 50 50"><rect x="7.5" y="10.5" width="33" height="24.5" fill="#f6f2f7" stroke="#b3b0b3" stroke-width="1.2"/><path d="M18.5 10.5V35.0" stroke="#b3b0b3" stroke-width="1"/><path d="M29.5 10.5V35.0" stroke="#b3b0b3" stroke-width="1"/><path d="M7.5 18.5H40.5" stroke="#b3b0b3" stroke-width="1"/><path d="M7.5 26.5H40.5" stroke="#b3b0b3" stroke-width="1"/><path d="M19 47L46 20" stroke="#f3f3f3" stroke-width="9"/><path d="M21 42L42 21" stroke="#b1b1b1" stroke-width="5.5"/><path d="M43.5 19.5L46.5 22.5" stroke="#b1b1b1" stroke-width="0"/><path d="M17 45L22.5 43.5L18.5 39.5Z" fill="#b1b1b1"/><path d="M40.5 18.5L44.5 14.5L48.5 18.5L44.5 22.5Z" fill="#b1b1b1"/></svg>
<svg class="b" style="left:388px;top:45px" width="50" height="50" viewBox="0 0 50 50"><path d="M5.5 34V7.5H35" fill="none" stroke="#b3b0b3" stroke-width="1.2"/><rect x="8.5" y="9.5" width="33.5" height="29" fill="#f6f2f7" stroke="#b3b0b3" stroke-width="1.2"/><path d="M16.5 9.5V38.5" stroke="#b3b0b3" stroke-width="1"/><path d="M25.5 9.5V38.5" stroke="#b3b0b3" stroke-width="1"/><path d="M34.5 9.5V38.5" stroke="#b3b0b3" stroke-width="1"/><path d="M8.5 15.5H42.0" stroke="#b3b0b3" stroke-width="1"/><path d="M8.5 30.5H42.0" stroke="#b3b0b3" stroke-width="1"/><rect x="17" y="29" width="30" height="15" fill="#f3f3f3"/><path d="M8.5 35H18" stroke="#b3b0b3"/><path d="M18 36.5L24 31V34.5H37V31L43.5 36.5L37 42V38.5H24V42Z" fill="#b1b1b1"/></svg>
<svg class="b" style="left:478px;top:45px" width="50" height="50" viewBox="0 0 50 50"><path d="M6.7 7.7H22.5L30.3 15.5V40.3H6.7Z" fill="#f6f2f7" stroke="#b3b0b3" stroke-width="1.3"/><path d="M22.5 7.7V15.5H30.3" fill="none" stroke="#b3b0b3" stroke-width="1.3"/><circle cx="27" cy="32.7" r="9.7" fill="#b5b5b5"/><circle cx="27" cy="32.7" r="6.3" fill="none" stroke="#ededed" stroke-width="2.2" stroke-dasharray="2.2 1.5"/><path d="M27 27V34M25 31.5L27 34L29 31.5M28 33H34M32 31L34.5 33L32 35" fill="none" stroke="#f0f0f0" stroke-width="1.6"/><path d="M27 32.7V23.7A9 9 0 0 1 36 32.7Z" fill="#b5b5b5"/><path d="M27 26V33.5M24.7 31L27 33.5L29.3 31" fill="none" stroke="#f0f0f0" stroke-width="1.7"/></svg>
<svg class="b" style="left:548px;top:45px" width="50" height="50" viewBox="0 0 50 50"><circle cx="32.4" cy="19.6" r="11.6" fill="#fff" stroke="#3c77bc" stroke-width="2.8"/><path d="M13 40L23 30.5" stroke="#3c77bc" stroke-width="4.6" stroke-linecap="round"/><circle cx="32.4" cy="13.6" r="1.9" fill="#555"/><rect x="31" y="17" width="2.9" height="10" fill="#555"/></svg>
<div class="tl" style="left:630px;top:61px;font-size:31px;line-height:34px;color:#a9a9a9;transform:scaleX(.85);transform-origin:0 0">a</div>
<div class="tl" style="left:645px;top:47px;font-size:23px;line-height:28px;color:#a9a9a9;">あ</div>
<svg class="b" style="left:625px;top:48px" width="45" height="44" viewBox="0 0 45 44"><path d="M6.2 8L10 12.2Q15 10.2 20.7 11.1Q16 13 14 15.5L17.5 19.7H6.2Z" fill="#a6a6a6"/><path d="M37.8 39.4L34 35.4Q29 37.2 23.8 36.3Q28.5 34.5 30.3 32.3L26.7 28.3H37.8Z" fill="#a6a6a6"/></svg>
<svg class="b" style="left:695px;top:45px" width="55" height="50" viewBox="0 0 55 50"><path d="M9.5 10H40.5Q42.5 10 42.5 12V31.5Q42.5 33.5 40.5 33.5H21.5L14.5 40.5V33.5H9.5Q7.5 33.5 7.5 31.5V12Q7.5 10 9.5 10Z" fill="#f6f2f7" stroke="#b3b0b3" stroke-width="1.3"/><rect x="3" y="3" width="20" height="20" fill="#f3f3f3"/><path d="M5 13.3H21.6M13.3 5V21.6" stroke="#b1b1b1" stroke-width="4.2"/></svg>
<svg class="b" style="left:750px;top:45px" width="55" height="50" viewBox="0 0 55 50"><path d="M6.5 10H38.0Q40.0 10 40.0 12V31.5Q40.0 33.5 38.0 33.5H18.5L11.5 40.5V33.5H6.5Q4.5 33.5 4.5 31.5V12Q4.5 10 6.5 10Z" fill="#f6f2f7" stroke="#b3b0b3" stroke-width="1.3"/><rect x="1" y="3" width="22" height="19" fill="#f3f3f3"/><path d="M3.5 6.5L20 21M20 6.5L3.5 21" stroke="#b1b1b1" stroke-width="3"/></svg>
<svg class="b" style="left:802px;top:45px" width="55" height="50" viewBox="0 0 55 50"><path d="M6.5 10H38.0Q40.0 10 40.0 12V31.5Q40.0 33.5 38.0 33.5H18.5L11.5 40.5V33.5H6.5Q4.5 33.5 4.5 31.5V12Q4.5 10 6.5 10Z" fill="#f6f2f7" stroke="#b3b0b3" stroke-width="1.3"/><rect x="1" y="3" width="24" height="16" fill="#f3f3f3"/><path d="M21.5 12.4H7.5" stroke="#b1b1b1" stroke-width="3.6"/><path d="M11.5 5.5L4.5 12.4L11.5 19.3" fill="none" stroke="#b1b1b1" stroke-width="3.6"/></svg>
<svg class="b" style="left:854px;top:45px" width="55" height="50" viewBox="0 0 55 50"><path d="M6.5 10H38.0Q40.0 10 40.0 12V31.5Q40.0 33.5 38.0 33.5H18.5L11.5 40.5V33.5H6.5Q4.5 33.5 4.5 31.5V12Q4.5 10 6.5 10Z" fill="#f6f2f7" stroke="#b3b0b3" stroke-width="1.3"/><rect x="1" y="3" width="24" height="16" fill="#f3f3f3"/><path d="M2 12.4H16" stroke="#b1b1b1" stroke-width="3.6"/><path d="M12 5.5L19 12.4L12 19.3" fill="none" stroke="#b1b1b1" stroke-width="3.6"/></svg>
<svg class="b" style="left:905px;top:50px" width="22" height="20" viewBox="0 0 22 20"><path d="M2.5 2.5H19.5V13.5H9L6.5 17V13.5H2.5Z" fill="#f6f2f7" stroke="#b3b0b3" stroke-width="1.1" stroke-dasharray="2 1.3"/><path d="M3.5 13L19 3" stroke="#b3b0b3" stroke-width="1.1"/></svg>
<svg class="b" style="left:905px;top:78px" width="22" height="20" viewBox="0 0 22 20"><path d="M5 2.5H19.5V12" fill="none" stroke="#b3b0b3" stroke-width="1.1"/><path d="M2.5 4.5H17.5V14.5H9L6.5 18V14.5H2.5Z" fill="#f6f2f7" stroke="#b3b0b3" stroke-width="1.1"/></svg>
</body></html>
